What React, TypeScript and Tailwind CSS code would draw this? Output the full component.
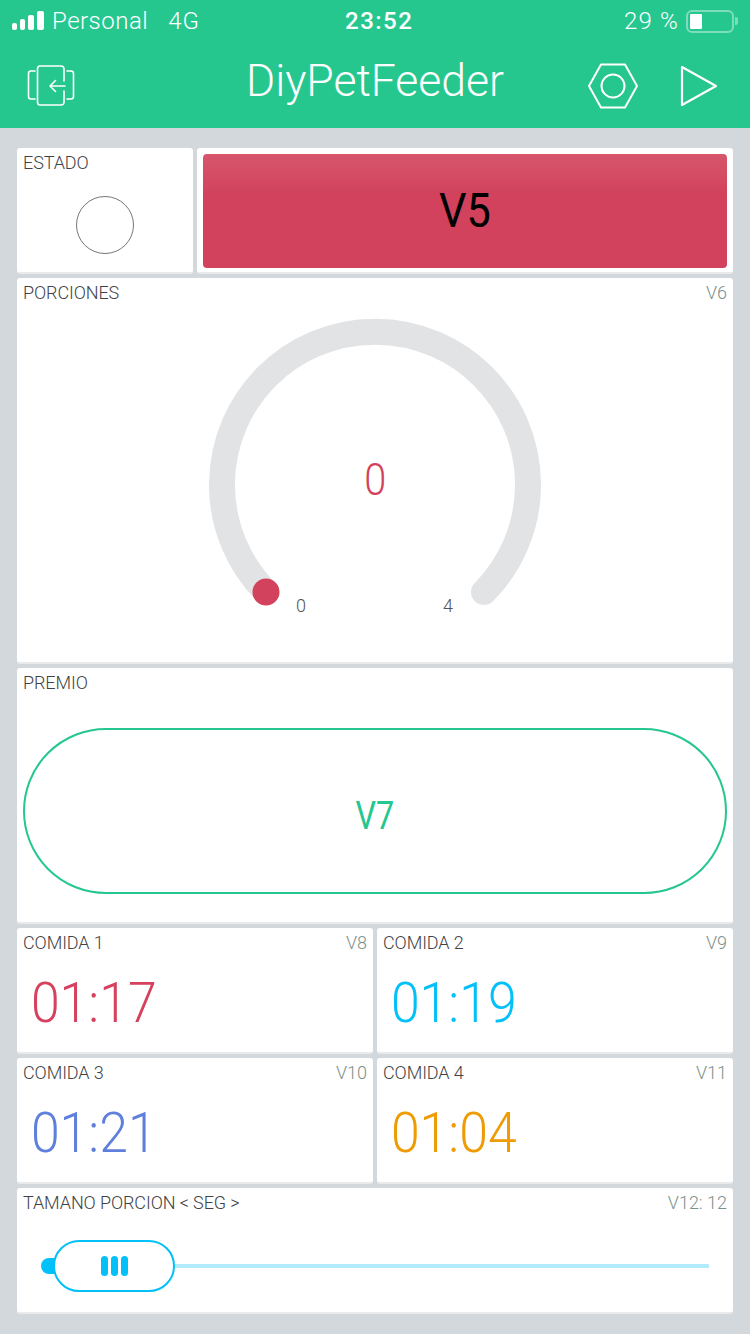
import type { ReactNode } from 'react';

const font = { fontFamily: 'Roboto, sans-serif' };

function Card({ label, pin, className, children }: { label: string; pin?: string; className: string; children?: ReactNode }) {
  return (
    <div className={`relative bg-white rounded-[3px] border-b-2 border-[#e8eaec] ${className}`}>
      <div className="flex justify-between px-[6px] pt-[4px] h-[26px] text-[18px] leading-[22px] font-light">
        <span className="text-[#3f4346] tracking-[-0.1px]">{label}</span>
        {pin && <span className="text-[#7d918b]">{pin}</span>}
      </div>
      {children}
    </div>
  );
}

function TimeCard({ label, pin, time, color }: { label: string; pin: string; time: string; color: string }) {
  return (
    <Card label={label} pin={pin} className="flex-1 h-[126px]">
      <div className={`pl-[15px] pt-[14px] text-[56px] leading-[70px] font-light origin-left scale-x-[0.925] ${color}`}>{time}</div>
    </Card>
  );
}

function StatusBar() {
  return (
    <div className="flex items-center h-[42px] text-white text-[24px] font-light">
      <div className="flex items-center w-[345px]">
        <div className="flex items-end gap-[3px] ml-[12px] mr-[8px] mb-[1px]">
          <span className="w-[5px] h-[7px] rounded-[2px] bg-white" />
          <span className="w-[5px] h-[11px] rounded-[2px] bg-white" />
          <span className="w-[6px] h-[15px] rounded-[2px] bg-white" />
          <span className="w-[7px] h-[19px] rounded-[2px] bg-white" />
        </div>
        <span className="tracking-[0.5px]">Personal</span>
        <span className="ml-[20px] tracking-[1px]">4G</span>
      </div>
      <span className="font-medium tracking-[1.5px]">23:52</span>
      <div className="ml-auto flex items-center mr-[12px]">
        <span className="mr-[7px] tracking-[1.2px]">29 %</span>
        <div className="w-[48px] h-[23px] rounded-[6px] border-2 border-white/40 p-[2px]">
          <div className="w-[12px] h-full bg-white rounded-[1px]" />
        </div>
        <div className="w-[3px] h-[8px] ml-[1px] bg-white/40 rounded-r-[2px]" />
      </div>
    </div>
  );
}

function Header() {
  return (
    <div className="bg-[#25c78f] h-[128px]">
      <StatusBar />
      <div className="flex items-start text-white">
        <svg className="ml-[27px] mt-[22px]" width="50" height="44" viewBox="0 0 50 44" fill="none" stroke="white" strokeWidth="1.6" strokeLinecap="round" strokeLinejoin="round">
          <path d="M37 17V5Q37 2 34 2H13Q10.5 2 10.5 5V38Q10.5 41 13 41H34Q37 41 37 38V27" />
          <path d="M8 7H4Q1.5 7 1.5 9.5V32.5Q1.5 35 4 35H8" />
          <path d="M40 7H44Q46.5 7 46.5 9.5V32.5Q46.5 35 44 35H40" />
          <path d="M38 22H23M28.5 16.5L23 22L28.5 27.5" />
        </svg>
        <span className="ml-[169px] mt-[13px] w-[258px] text-[44.5px] leading-[52px] font-light whitespace-nowrap">DiyPetFeeder</span>
        <svg className="ml-[83px] mt-[21px]" width="52" height="46" viewBox="0 0 52 46" fill="none" stroke="white" strokeWidth="2">
          <path d="M14 1.5H38L50 23L38 44.5H14L2 23Z" strokeLinejoin="round" />
          <circle cx="26" cy="23" r="11.5" />
        </svg>
        <svg className="ml-[41px] mt-[23px]" width="38" height="42" viewBox="0 0 38 42" fill="none" stroke="white" strokeWidth="2.2" strokeLinejoin="round">
          <path d="M2 2L36 21L2 40Z" />
        </svg>
      </div>
    </div>
  );
}

export default function App() {
  return (
    <div className="w-[750px] h-[1334px] bg-[#d3d8dc] overflow-hidden" style={font}>
      <Header />
      <div className="flex flex-col gap-[4px] pt-[20px] px-[17px]">
        <div className="flex gap-[4px]">
          <Card label="ESTADO" className="w-[176px] h-[126px]">
            <div className="flex justify-center pt-[22px]">
              <div className="w-[58px] h-[58px] rounded-full border border-[#777]" />
            </div>
          </Card>
          <div className="flex-1 h-[126px] bg-white rounded-[3px] border-b-2 border-[#e8eaec] p-[6px] pb-[4px]">
            <div className="h-full rounded-[4px] bg-gradient-to-b from-[#d6566c] via-[#d2425c] via-35% to-[#d2425c] flex items-center justify-center text-black text-[48px]">
              <span className="scale-x-[0.9]">V5</span>
            </div>
          </div>
        </div>

        <Card label="PORCIONES" pin="V6" className="h-[386px]">
          <div className="relative h-[358px]">
            <svg className="absolute left-[188px] top-[14px]" width="340" height="310" viewBox="0 0 340 310" fill="none">
              <path d="M61 274A153 153 0 1 1 279 274" stroke="#e2e3e5" strokeWidth="26" strokeLinecap="round" />
              <circle cx="61" cy="274" r="13.5" fill="#d2425c" />
            </svg>
            <span className="absolute left-0 right-0 top-[151px] text-center text-[#d2425c] text-[44px] leading-[50px] font-light">
              <span className="inline-block scale-x-[0.9]">0</span>
            </span>
            <span className="absolute left-[279px] top-[291px] text-[#555] text-[18px] leading-[22px] font-light">0</span>
            <span className="absolute left-[426px] top-[291px] text-[#555] text-[18px] leading-[22px] font-light">4</span>
          </div>
        </Card>

        <Card label="PREMIO" className="h-[256px]">
          <div className="px-[6px] pt-[34px]">
            <div className="h-[166px] rounded-full border-2 border-[#25c78f] flex items-center justify-center pt-[10px] text-[#25c78f] text-[38px]">
              <span className="scale-x-[0.85]">V7</span>
            </div>
          </div>
        </Card>

        <div className="flex gap-[4px]">
          <TimeCard label="COMIDA 1" pin="V8" time="01:17" color="text-[#d6415e]" />
          <TimeCard label="COMIDA 2" pin="V9" time="01:19" color="text-[#04c0f8]" />
        </div>
        <div className="flex gap-[4px]">
          <TimeCard label="COMIDA 3" pin="V10" time="01:21" color="text-[#5f7fdc]" />
          <TimeCard label="COMIDA 4" pin="V11" time="01:04" color="text-[#ee9b05]" />
        </div>

        <Card label="TAMANO PORCION < SEG >" pin="V12: 12" className="h-[126px]">
          <div className="relative flex items-center h-[52px] mt-[26px] ml-[24px] mr-[24px]">
            <div className="w-[20px] h-[16px] rounded-l-full bg-[#04c0f8]" />
            <div className="flex-1 h-[4px] bg-[#b2ebfb] ml-[100px]" />
            <div className="absolute left-[12px] top-0 w-[122px] h-[52px] rounded-full bg-white border-2 border-[#04c0f8] flex items-center justify-center gap-[3px]">
              <span className="w-[7px] h-[20px] rounded-full bg-[#04c0f8]" />
              <span className="w-[7px] h-[20px] rounded-full bg-[#04c0f8]" />
              <span className="w-[7px] h-[20px] rounded-full bg-[#04c0f8]" />
            </div>
          </div>
        </Card>
      </div>
    </div>
  );
}
